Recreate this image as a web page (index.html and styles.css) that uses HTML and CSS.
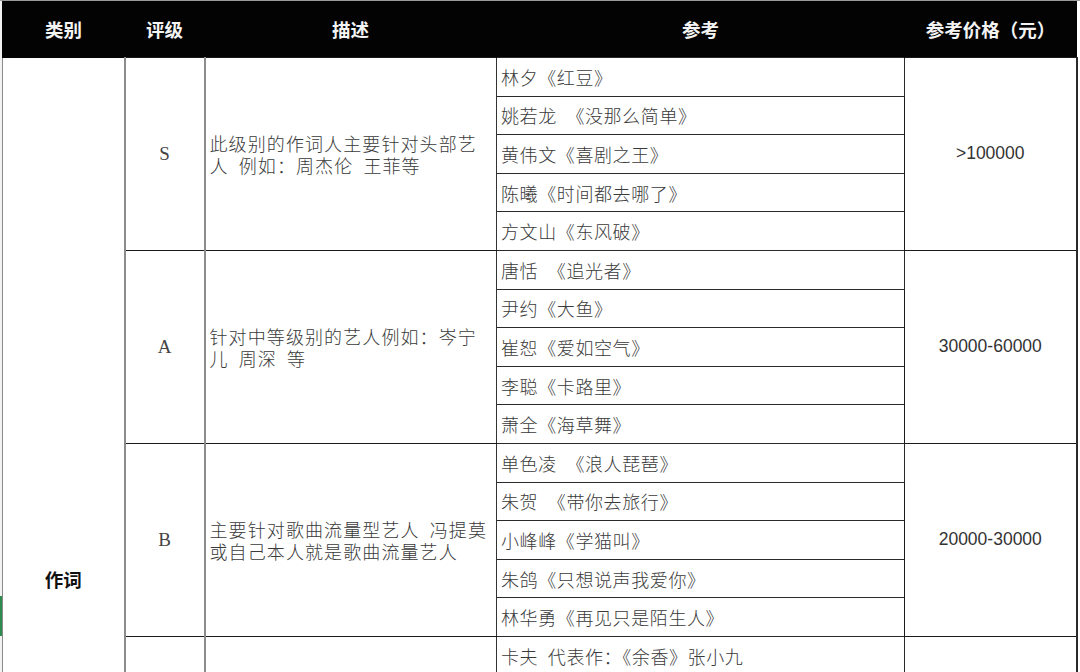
FILE: index.html
```html
<!DOCTYPE html>
<html lang="zh">
<head>
<meta charset="utf-8">
<link rel="stylesheet" href="styles.css">
</head>
<body>
<div class="sheet">
<table class="grid">
  <colgroup>
    <col class="c1"><col class="c2"><col class="c3"><col class="c4"><col class="c5">
  </colgroup>
  <thead>
    <tr class="head">
      <th>类别</th><th>评级</th><th>描述</th><th>参考</th><th>参考价格（元）</th>
    </tr>
  </thead>
  <tbody>
    <tr class="r">
      <td class="cat" rowspan="17"><span>作词</span></td>
      <td class="lvl" rowspan="5">S</td>
      <td class="desc" rowspan="5">此级别的作词人主要针对头部艺人&ensp;例如：周杰伦&ensp;王菲等</td>
      <td class="ref">林夕《红豆》</td>
      <td class="price" rowspan="5">&gt;100000</td>
    </tr>
    <tr class="r"><td class="ref">姚若龙&ensp;《没那么简单》</td></tr>
    <tr class="r"><td class="ref">黄伟文《喜剧之王》</td></tr>
    <tr class="r"><td class="ref">陈曦《时间都去哪了》</td></tr>
    <tr class="r"><td class="ref">方文山《东风破》</td></tr>
    <tr class="r">
      <td class="lvl" rowspan="5">A</td>
      <td class="desc" rowspan="5">针对中等级别的艺人例如：岑宁儿&ensp;周深&ensp;等</td>
      <td class="ref">唐恬&ensp;《追光者》</td>
      <td class="price" rowspan="5">30000-60000</td>
    </tr>
    <tr class="r"><td class="ref">尹约《大鱼》</td></tr>
    <tr class="r"><td class="ref">崔恕《爱如空气》</td></tr>
    <tr class="r"><td class="ref">李聪《卡路里》</td></tr>
    <tr class="r"><td class="ref">萧全《海草舞》</td></tr>
    <tr class="r">
      <td class="lvl" rowspan="5">B</td>
      <td class="desc" rowspan="5">主要针对歌曲流量型艺人&ensp;冯提莫或自己本人就是歌曲流量艺人</td>
      <td class="ref">单色凌&ensp;《浪人琵琶》</td>
      <td class="price" rowspan="5">20000-30000</td>
    </tr>
    <tr class="r"><td class="ref">朱贺&ensp;《带你去旅行》</td></tr>
    <tr class="r"><td class="ref">小峰峰《学猫叫》</td></tr>
    <tr class="r"><td class="ref">朱鸽《只想说声我爱你》</td></tr>
    <tr class="r"><td class="ref">林华勇《再见只是陌生人》</td></tr>
    <tr class="r">
      <td class="lvl" rowspan="2"></td>
      <td class="desc" rowspan="2"></td>
      <td class="ref">卡夫&ensp;代表作：《余香》张小九</td>
      <td class="price" rowspan="2"></td>
    </tr>
    <tr class="r"><td class="ref">&nbsp;</td></tr>
  </tbody>
</table>
</div>
</body>
</html>
```

FILE: styles.css
```css
html, body {
  margin: 0;
  padding: 0;
  background: #ffffff;
  overflow: hidden;
}
body {
  width: 1080px;
  height: 672px;
  font-family: "Liberation Serif", "Noto Sans CJK SC", serif;
}
.sheet {
  padding-left: 2px;
  border-top: 1px solid #9a9a9a;
  background-color: #fff;
  background-image:
    linear-gradient(#2e8b4e, #2e8b4e),
    linear-gradient(to right, #f2f2f2 0, #f2f2f2 2px, #fff 2px);
  background-repeat: no-repeat, no-repeat;
  background-size: 2px 40px, 100% 100%;
  background-position: 0 595px, 0 0;
}
.grid {
  border-collapse: collapse;
  table-layout: fixed;
  width: 1074px;
}
.c1 { width: 122px; }
.c2 { width: 80px; }
.c3 { width: 292px; }
.c4 { width: 408px; }
.c5 { width: 172px; }

.head th {
  height: 56px;
  padding: 0;
  background: #030304;
  color: #f4f4f4;
  font-family: "Noto Sans CJK SC", sans-serif;
  font-weight: 700;
  font-size: 18.5px;
  text-align: center;
  vertical-align: middle;
  border: 0;
  border-left: 1px solid #030304;
  border-right: 1px solid #030304;
}
.r { height: 38.6px; }
td {
  padding: 0;
  color: #3a3a3a;
  font-size: 18px;
  vertical-align: middle;
}
.cat {
  border-left: 1px solid #8a8a8a;
  border-right: 2px solid #8c8c8c;
  vertical-align: top;
  text-align: center;
  padding-top: 508px;
  font-family: "Noto Sans CJK SC", sans-serif;
  font-weight: 700;
  font-size: 18.5px;
  color: #111;
}
.lvl {
  border-right: 2px solid #8c8c8c;
  border-top: 1px solid #1a1a1a;
  border-bottom: 1px solid #1a1a1a;
  text-align: center;
  font-size: 19px;
  color: #444;
}
.desc {
  border-right: 1px solid #333;
  border-top: 1px solid #1a1a1a;
  border-bottom: 1px solid #1a1a1a;
  padding: 0 6px 0 4px;
  line-height: 22px;
  font-family: "Noto Sans CJK SC", serif;
  font-weight: 300;
  letter-spacing: 1.1px;
}
.ref {
  border: 1px solid #2a2a2a;
  padding-left: 4px;
  font-family: "Noto Sans CJK SC", serif;
  font-weight: 300;
  letter-spacing: 0.6px;
  white-space: pre;
}
.price {
  border: 1px solid #1a1a1a;
  border-right: 2px solid #2a2a2a;
  text-align: center;
  font-family: "Liberation Sans", sans-serif;
  font-size: 17.5px;
  color: #333;
}
```
